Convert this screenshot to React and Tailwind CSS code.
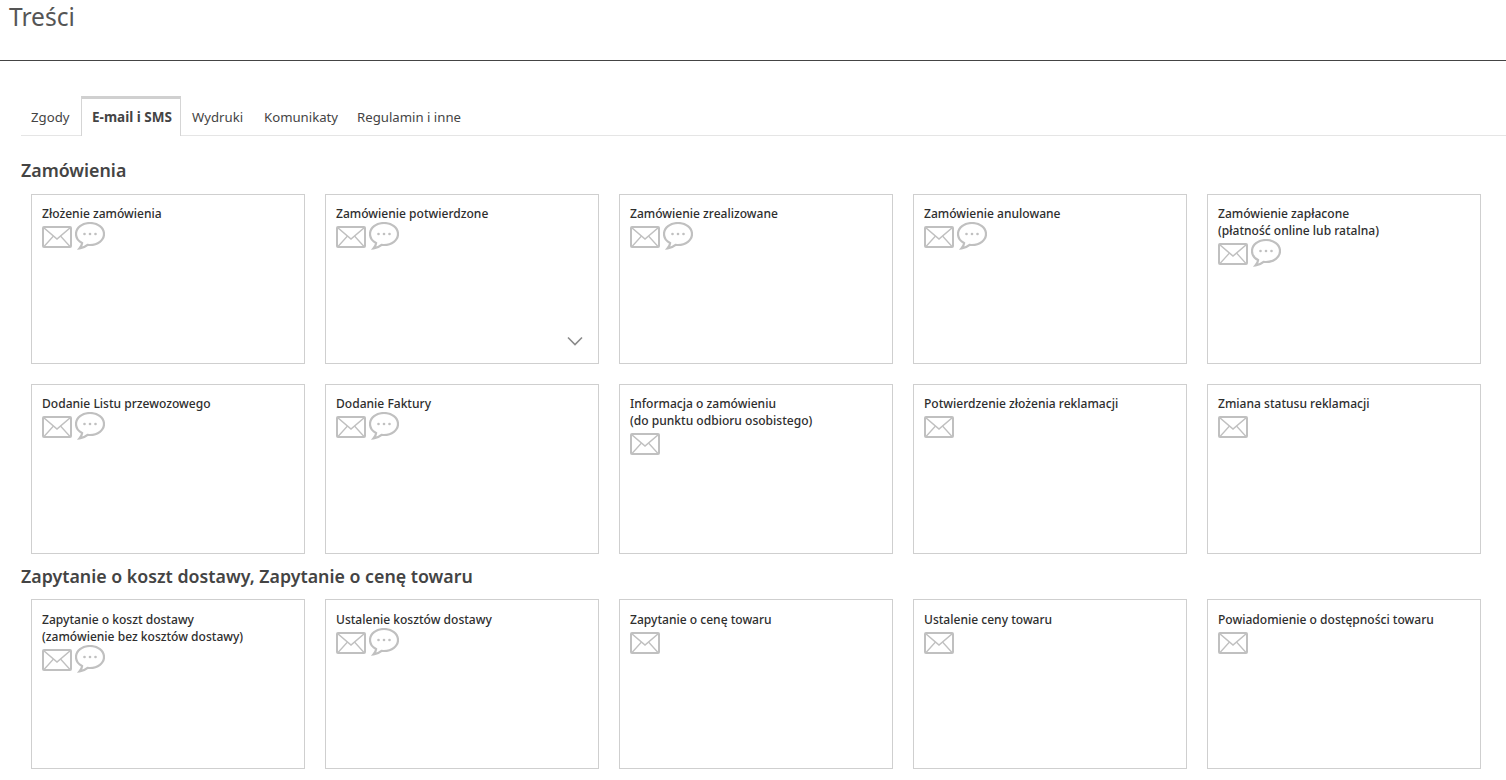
import React from 'react';

function MailIcon() {
    return (
        <svg width="30" height="22" viewBox="0 0 30 22" fill="none" stroke="#c0c0c0" className="block shrink-0 mt-[4px]">
            <rect x="1" y="1" width="28" height="20" rx="1" strokeWidth="2" />
            <path d="M1.500 1.500L15 13 28.500 1.500" strokeWidth="1.600" />
            <path d="M2 20.500l9.500-10.500M28 20.500L18.500 10" strokeWidth="1.300" />
        </svg>
    );
}

function SmsIcon() {
    return (
        <svg width="30" height="28" viewBox="0 0 30 28" fill="none" className="block shrink-0 ml-[3px]">
            <path d="M15 1C7.200 1 1 5.900 1 12c0 3.900 2.400 7.200 6.100 9.100-.2 2-1.100 3.600-2.500 5.200 3.300-.4 6.100-1.900 8-3.500.8.100 1.600.200 2.400.200 7.800 0 14-4.900 14-11C29 5.900 22.800 1 15 1z" stroke="#c0c0c0" strokeWidth="2.200" />
            <circle cx="9.500" cy="12" r="1.300" fill="#c0c0c0" />
            <circle cx="15" cy="12" r="1.300" fill="#c0c0c0" />
            <circle cx="20.500" cy="12" r="1.300" fill="#c0c0c0" />
        </svg>
    );
}

function Card({ title, sub, sms = true, chevron = false, low = false }) {
    return (
        <div className={`relative h-[170px] border border-[#cfcfcf] bg-white px-[10px] ${low ? 'pt-[11px]' : 'pt-[10px]'}`}>
            <div className="text-[12.05px] leading-[17px] font-medium text-[#2e2e2e]">
                {title}
                {sub && <br />}
                {sub}
            </div>
            <div className="flex items-start">
                <MailIcon />
                {sms && <SmsIcon />}
            </div>
            {chevron && (
                <svg width="16" height="10" viewBox="0 0 16 10" fill="none" stroke="#8a8a8a" strokeWidth="1.600" className="absolute right-[15px] bottom-[17px]">
                    <path d="M1 1.500l7 7 7-7" />
                </svg>
            )}
        </div>
    );
}

const tabs = [
    { label: 'Zgody', className: 'w-[60px] pl-[10px]' },
    { label: 'E-mail i SMS', active: true },
    { label: 'Wydruki', className: 'w-[73px] pl-[11px]' },
    { label: 'Komunikaty', className: 'w-[93px] pl-[10px]' },
    { label: 'Regulamin i inne', className: 'pl-[10px]' },
];

const orders = [
    { title: 'Złożenie zamówienia' },
    { title: 'Zamówienie potwierdzone', chevron: true },
    { title: 'Zamówienie zrealizowane' },
    { title: 'Zamówienie anulowane' },
    { title: 'Zamówienie zapłacone', sub: '(płatność online lub ratalna)' },
    { title: 'Dodanie Listu przewozowego' },
    { title: 'Dodanie Faktury' },
    { title: 'Informacja o zamówieniu', sub: '(do punktu odbioru osobistego)', sms: false },
    { title: 'Potwierdzenie złożenia reklamacji', sms: false },
    { title: 'Zmiana statusu reklamacji', sms: false },
];

const quotes = [
    { title: 'Zapytanie o koszt dostawy', sub: '(zamówienie bez kosztów dostawy)' },
    { title: 'Ustalenie kosztów dostawy' },
    { title: 'Zapytanie o cenę towaru', sms: false },
    { title: 'Ustalenie ceny towaru', sms: false },
    { title: 'Powiadomienie o dostępności towaru', sms: false },
];

export default function App() {
    return (
        <div className="w-[1506px] h-[780px] overflow-hidden bg-white font-['Noto_Sans','Open_Sans',sans-serif] text-[#444]">
            {/* Header */}
            <div className="h-[61px] border-b border-[#444] pl-[9px]">
                <h1 className="text-[24.6px] leading-[33px] font-normal text-[#555]">Treści</h1>
            </div>

            {/* Tabs */}
            <div className="ml-[21px] mt-[35px] h-[40px] flex border-b border-[#e5e5e5]">
                {tabs.map((tab) => (
                    tab.active ? (
                        <div key={tab.label} className="h-[40px] w-[100px] pl-[10px] pt-[9px] bg-white border-x border-[#d5d5d5] border-t-[3px] border-t-[#d0d0d0] text-[13.5px] leading-[18px] font-bold text-[#444] whitespace-nowrap">
                            {tab.label}
                        </div>
                    ) : (
                        <div key={tab.label} className={`h-[39px] pt-[12px] text-[13.2px] leading-[18px] text-[#444] whitespace-nowrap ${tab.className}`}>
                            {tab.label}
                        </div>
                    )
                ))}
            </div>

            {/* Zamówienia */}
            <h2 className="ml-[21px] mt-[22px] text-[17.8px] leading-[25px] font-semibold text-[#444]">Zamówienia</h2>
            <div className="ml-[31px] mt-[11px] grid grid-cols-[repeat(5,274px)] gap-[20px]">
                {orders.map((c) => <Card key={c.title} {...c} />)}
            </div>

            {/* Zapytania */}
            <h2 className="ml-[21px] mt-[10px] text-[17.8px] leading-[25px] font-semibold text-[#444]">Zapytanie o koszt dostawy, Zapytanie o cenę towaru</h2>
            <div className="ml-[31px] mt-[10px] grid grid-cols-[repeat(5,274px)] gap-[20px]">
                {quotes.map((c) => <Card key={c.title} {...c} low />)}
            </div>
        </div>
    );
}
